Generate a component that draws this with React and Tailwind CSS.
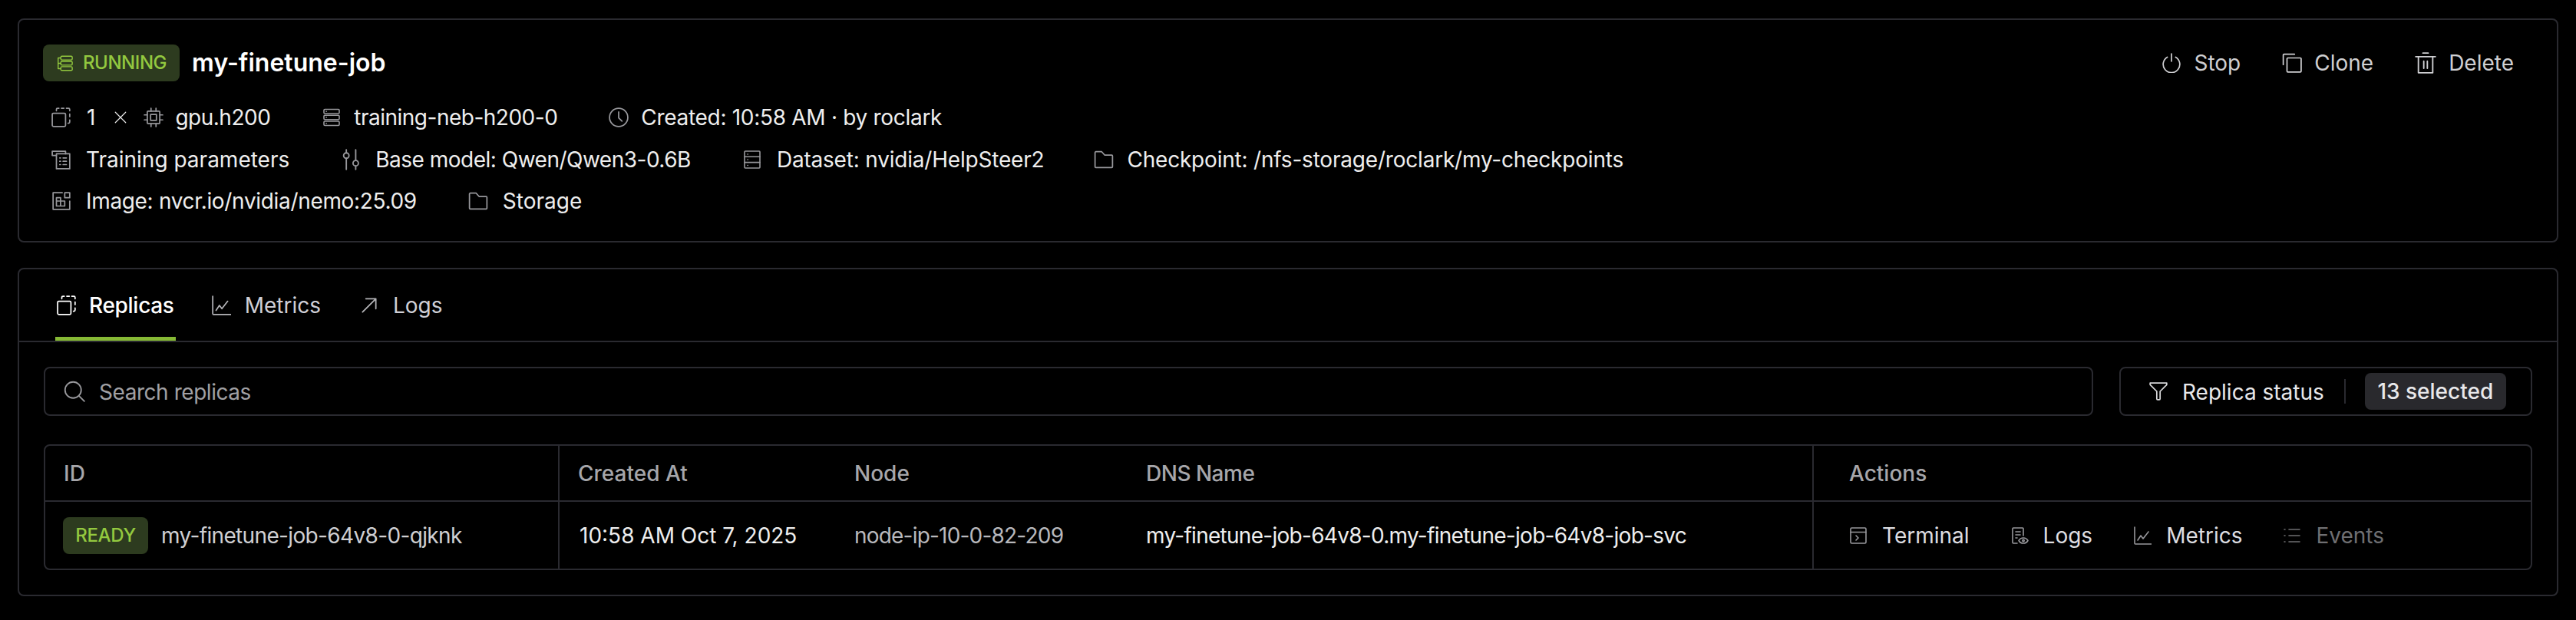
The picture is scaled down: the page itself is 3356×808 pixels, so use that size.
import React from "react";

const I = ({ size = 26, children, className = "text-[#98989c]", sw = 1.6 }) => (
  <svg width={size} height={size} viewBox="0 0 24 24" fill="none" stroke="currentColor" strokeWidth={sw} strokeLinecap="round" strokeLinejoin="round" className={`shrink-0 ${className}`}>
    {children}
  </svg>
);

const Replicas = (p) => (
  <I {...p}>
    <rect x="1" y="7" width="16" height="16" rx="1.5" />
    <path d="M6 4V2.5A1.5 1.5 0 0 1 7.5 1H9M12 1h3M18 1h2.5A1.5 1.5 0 0 1 22 2.5V4M22 8v3M22 15v2.5A1.5 1.5 0 0 1 20.5 19H20" />
  </I>
);
const Chip = (p) => (
  <I {...p}>
    <rect x="4.5" y="4.5" width="15" height="15" rx="1" />
    <rect x="8.5" y="8.5" width="7" height="7" />
    <path d="M9 1v3.5M15 1v3.5M9 19.5V23M15 19.5V23M1 9h3.5M1 15h3.5M19.5 9H23M19.5 15H23" />
  </I>
);
const Server = (p) => (
  <I {...p}>
    <rect x="2" y="1.5" width="20" height="5.5" rx="1.2" />
    <rect x="2" y="9.2" width="20" height="5.5" rx="1.2" />
    <rect x="2" y="17" width="20" height="5.5" rx="1.2" />
    <path d="M5 4.3h.3M5 12h.3M5 19.8h.3" />
  </I>
);
const Clock = (p) => (
  <I {...p}>
    <circle cx="12" cy="12" r="11" />
    <path d="M12 5.5v7l4 4" />
  </I>
);
const Params = (p) => (
  <I {...p}>
    <path d="M17 5V2H1v5h5" />
    <rect x="6" y="5" width="16" height="18" />
    <path d="M10 10h1M14 10h4M10 14h1M14 14h4M10 18h1M14 18h4" />
  </I>
);
const Sliders = (p) => (
  <I {...p}>
    <path d="M7 1v3.5M7 10.5V23M17.5 1v12M17.5 19v4" />
    <circle cx="7" cy="7.5" r="3" />
    <circle cx="17.5" cy="16" r="3" />
  </I>
);
const Dataset = (p) => (
  <I {...p}>
    <rect x="2" y="1" width="20" height="22" rx="1" />
    <path d="M2 8.3h20M2 15.6h20M6 5h.3M6 12h.3M6 19.5h.3" />
  </I>
);
const Folder = (p) => (
  <I {...p}>
    <path d="M1.5 3.5A1 1 0 0 1 2.5 2.5H9.5L13 6.5H21.5A1 1 0 0 1 22.5 7.5V20.5A1 1 0 0 1 21.5 21.5H2.5A1 1 0 0 1 1.5 20.5Z" />
  </I>
);
const ImageI = (p) => (
  <I {...p}>
    <path d="M13 2H2v20h20V12" />
    <rect x="16" y="2" width="6" height="6" />
    <path d="M6 8h5v4h5v6H6ZM6 12h5v6" />
  </I>
);
const Power = (p) => (
  <I {...p}>
    <path d="M12 1v9" />
    <path d="M7 5a10 10 0 1 0 10 0" />
  </I>
);
const Clone = (p) => (
  <I {...p}>
    <rect x="6" y="6" width="17" height="17" rx="1" />
    <path d="M1.5 14V2.5A1 1 0 0 1 2.5 1.5H15" />
  </I>
);
const Trash = (p) => (
  <I {...p}>
    <path d="M1 5h22M9 1h6M4 5v18h16V5M10 10v8M14 10v8" />
  </I>
);
const Chart = (p) => (
  <I {...p}>
    <path d="M2 1v21a1 1 0 0 0 1 1h21" />
    <path d="M6 18l4-6 3 4 7-9" />
  </I>
);
const Arrow = (p) => (
  <I {...p}>
    <path d="M4 20L20 4M8 4h12v12" />
  </I>
);
const Search = (p) => (
  <I {...p}>
    <circle cx="10.5" cy="10.5" r="9" />
    <path d="M17 17l6 6" />
  </I>
);
const Filter = (p) => (
  <I {...p}>
    <path d="M2 2h20v2l-8 8v9a1 1 0 0 1-1 1h-2a1 1 0 0 1-1-1v-9L2 4Z" />
  </I>
);
const Terminal = (p) => (
  <I {...p}>
    <rect x="2" y="2" width="20" height="20" rx="1.5" />
    <path d="M2 7.5h20M9 12l3 3-3 3" />
  </I>
);
const LogsI = (p) => (
  <I {...p}>
    <path d="M9 22H4a1 1 0 0 1-1-1V3a1 1 0 0 1 1-1h12a1 1 0 0 1 1 1v9" />
    <path d="M7 7h6M7 11h6M7 15h2" />
    <path d="M11 18.5s2-3.5 6-3.5 6 3.5 6 3.5-2 3.5-6 3.5-6-3.5-6-3.5Z" />
    <circle cx="17" cy="18.5" r="1.2" />
  </I>
);
const Events = (p) => (
  <I {...p}>
    <path d="M8 4h14M8 12h14M8 20h14M2 4h1M2 12h1M2 20h1" />
  </I>
);
const Running = (p) => (
  <I {...p}>
    <rect x="6" y="1.5" width="17" height="5.5" rx="1.5" />
    <rect x="6" y="9.2" width="17" height="5.5" rx="1.5" />
    <rect x="6" y="17" width="17" height="5.5" rx="1.5" />
    <path d="M6 4H2v16h4M2 12h4" />
  </I>
);
const Times = (p) => (
  <I {...p} sw={1.6}>
    <path d="M3 3l18 18M21 3L3 21" />
  </I>
);

const Meta = ({ icon, children, className = "", gap = "gap-[16px]" }) => (
  <div className={`flex items-center text-[28px] text-[#eeeeee] ${gap}`}>
    <span className="flex w-[32px] justify-center">{icon}</span>
    <span className={`whitespace-nowrap ${className}`}>{children}</span>
  </div>
);

const Top = ({ icon, children }) => (
  <button className="flex items-center gap-[16px] text-[28px] text-[#cfcfd2]">
    {icon}
    <span>{children}</span>
  </button>
);

const Tab = ({ icon, children, active, className = "" }) => (
  <div className={`flex h-[93px] items-center border-b-[5px] pt-[5px] text-[28px] ${active ? "gap-[16px] border-[#86b935] px-[2px] font-medium text-white" : "gap-[18px] border-transparent text-[#cfcfd6]"} ${className}`}>
    {icon}
    <span className={active ? "tracking-[-0.3px]" : ""}>{children}</span>
  </div>
);

const Act = ({ icon, children, dim }) => (
  <div className={`flex items-center gap-[19px] ${dim ? "text-[#6f6f72]" : "text-[#dddde0]"}`}>
    {icon}
    <span>{children}</span>
  </div>
);

export default function App() {
  return (
    <div className="min-h-[808px] bg-black px-[23px] pt-[24px] font-['Inter',sans-serif] text-[28px]">
      <section className="h-[292px] rounded-[8px] border-2 border-[#2a2a30] px-[31px] pt-[32px]">
        <div className="flex h-[48px] items-center">
          <div className="flex h-[48px] items-center gap-[13px] rounded-[8px] bg-[#2d3b1f] pr-[17px] pl-[18px] text-[24px] font-medium text-[#93c93f]">
            <Running size={21} className="text-[#93c93f]" />
            <span className="tracking-[-0.45px]">RUNNING</span>
          </div>
          <h1 className="ml-[16px] text-[32px] font-semibold text-white">my-finetune-job</h1>
          <div className="ml-auto flex items-center gap-[54px] pr-[25px]">
            <Top icon={<Power className="text-[#cfcfd2]" />}>Stop</Top>
            <Top icon={<Clone className="text-[#cfcfd2]" />}>Clone</Top>
            <Top icon={<Trash size={28} className="text-[#cfcfd2]" />}>Delete</Top>
          </div>
        </div>
        <div className="mt-[19px] flex h-[55px] items-center gap-[64px] pl-[8px]">
          <div className="flex items-center text-[28px] text-[#eeeeee]">
            <span className="flex w-[32px] justify-center"><Replicas /></span>
            <span className="ml-[17px]">1</span>
            <span className="ml-[24px]"><Times size={18} className="text-[#eeeeee]" /></span>
            <span className="ml-[21px]"><Chip /></span>
            <span className="ml-[15px] tracking-[-0.5px]">gpu.h200</span>
          </div>
          <Meta icon={<Server size={24} />} gap="gap-[13px]" className="tracking-[-0.5px]">training-neb-h200-0</Meta>
          <Meta icon={<Clock />} gap="gap-[13px]" className="tracking-[-0.3px]">Created: 10:58 AM · by roclark</Meta>
        </div>
        <div className="flex h-[55px] items-center gap-[64px] pl-[8px]">
          <Meta icon={<Params />}>Training parameters</Meta>
          <Meta icon={<Sliders size={28} />} className="tracking-[-0.5px]">Base model: Qwen/Qwen3-0.6B</Meta>
          <Meta icon={<Dataset size={24} />} className="tracking-[-0.2px]">Dataset: nvidia/HelpSteer2</Meta>
          <div className="-ml-[2px]">
            <Meta icon={<Folder />} gap="gap-[14px]" className="tracking-[-0.2px]">Checkpoint: /nfs-storage/roclark/my-checkpoints</Meta>
          </div>
        </div>
        <div className="flex h-[54px] items-center gap-[64px] pl-[8px]">
          <Meta icon={<ImageI />} className="tracking-[-0.33px]">Image: nvcr.io/nvidia/nemo:25.09</Meta>
          <Meta icon={<Folder />}>Storage</Meta>
        </div>
      </section>

      <section className="mt-[33px] h-[428px] rounded-[8px] border-2 border-[#2a2a30]">
        <div className="flex h-[95px] gap-[46px] border-b-2 border-[#2a2a30] pl-[47px]">
          <Tab active icon={<Replicas className="text-white" />}>Replicas</Tab>
          <Tab icon={<Chart className="text-[#b4b4b8]" />}>Metrics</Tab>
          <Tab icon={<Arrow className="text-[#b4b4b8]" />} className="ml-[4px]">Logs</Tab>
        </div>
        <div className="px-[32px] pt-[32px]">
          <div className="flex gap-[34px]">
            <div className="flex h-[64px] flex-1 items-center gap-[18px] rounded-[8px] border-2 border-[#2a2a30] pl-[24px] text-[#a0a0a4]">
              <Search size={28} />
              <span className="pt-[2px] tracking-[-0.45px]">Search replicas</span>
            </div>
            <div className="flex h-[64px] w-[538px] items-center rounded-[8px] border-2 border-[#2a2a30] pl-[36px] text-[#e8e8ea]">
              <Filter className="text-[#d8d8da]" />
              <span className="ml-[18px] pt-[2px]">Replica status</span>
              <span className="ml-[26px] h-[32px] w-[2px] bg-[#2a2a30]" />
              <span className="ml-[25px] flex h-[48px] w-[184px] items-center justify-center rounded-[8px] bg-[#29292d] font-medium">13 selected</span>
            </div>
          </div>
          <div className="mt-[37px] overflow-hidden rounded-[8px] border-2 border-[#2a2a30]">
            <div className="grid h-[73px] grid-cols-[670px_360px_380px_894px_1fr] items-stretch border-b-2 border-[#2a2a30] font-medium text-[#a6a6aa]">
              <div className="flex items-center border-r-2 border-[#2a2a30] pl-[24px]">ID</div>
              <div className="flex items-center pl-[24px]">Created At</div>
              <div className="flex items-center pl-[24px]">Node</div>
              <div className="flex items-center border-r-2 border-[#2a2a30] pl-[24px]"><span className="tracking-[-0.5px]">DNS Name</span></div>
              <div className="flex items-center pl-[46px]">Actions</div>
            </div>
            <div className="grid h-[87px] grid-cols-[670px_360px_380px_894px_1fr] items-stretch">
              <div className="flex items-center gap-[17px] border-r-2 border-[#2a2a30] pl-[23px] text-[#cfcfd2]">
                <span className="flex h-[48px] w-[111px] items-center justify-center rounded-[8px] bg-[#2d3b1f] text-[24px] font-medium tracking-[-0.3px] text-[#93c93f]">READY</span>
                <span className="tracking-[-0.65px]">my-finetune-job-64v8-0-qjknk</span>
              </div>
              <div className="flex items-center pl-[26px] text-[#eeeeee]">10:58 AM Oct 7, 2025</div>
              <div className="flex items-center pl-[24px] text-[#b8b8bc]"><span className="tracking-[-0.8px]">node-ip-10-0-82-209</span></div>
              <div className="flex items-center border-r-2 border-[#2a2a30] pl-[24px] text-[#eeeeee]"><span className="tracking-[-0.72px]">my-finetune-job-64v8-0.my-finetune-job-64v8-job-svc</span></div>
              <div className="flex items-center gap-[53px] pl-[46px]">
                <Act icon={<Terminal size={24} />}>Terminal</Act>
                <Act icon={<LogsI size={24} />}>Logs</Act>
                <Act icon={<Chart size={24} />}>Metrics</Act>
                <Act dim icon={<Events size={24} className="text-[#6f6f72]" />}>Events</Act>
              </div>
            </div>
          </div>
        </div>
      </section>
    </div>
  );
}
